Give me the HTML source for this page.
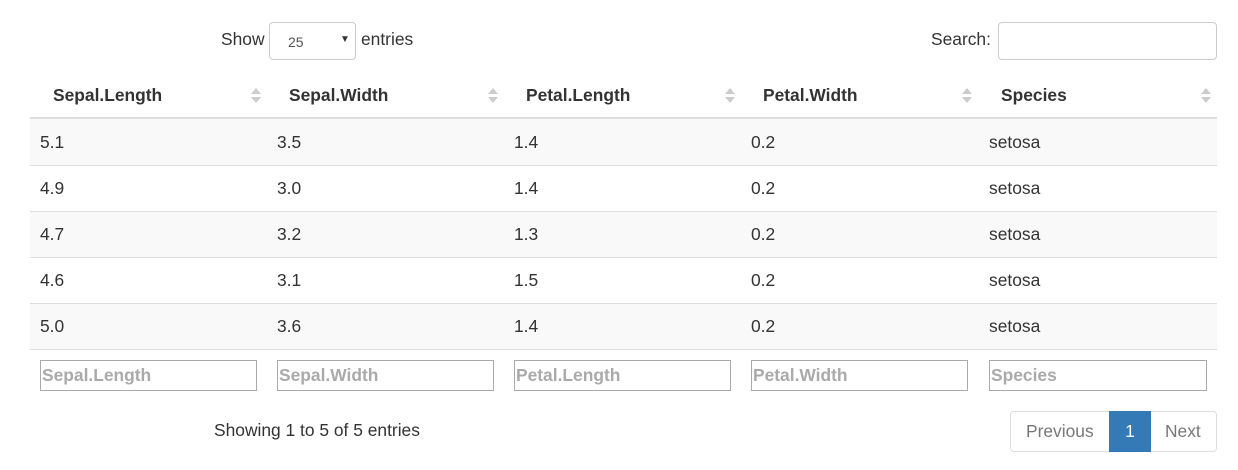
<!DOCTYPE html>
<html><head><style>
body{margin:0;width:1238px;height:470px;background:#fff;font-family:"Liberation Sans",sans-serif;color:#333;font-size:17.4px;position:relative;overflow:hidden}
.a{position:absolute}
.sel{left:269px;top:22px;width:87px;height:38px;border:1px solid #ccc;border-radius:4px;box-sizing:border-box;font-size:14px}
.inp{border:1px solid #ccc;border-radius:4px;box-sizing:border-box}
.th{top:72px;height:46px;font-weight:bold;line-height:46px}
.row{left:30px;width:1187px;height:46px;border-top:1px solid #ddd;box-sizing:border-box}
.fi{top:360px;width:217px;height:31px;border:1px solid #aaa;box-sizing:border-box;color:#aaa;font-weight:bold;font-size:17.4px;line-height:29px;padding-left:1px}
.col{top:119px;line-height:46px}
</style></head><body>
<div class="a" style="left:221px;top:29px">Show</div>
<div class="a sel"><span class="a" style="left:18px;top:11px;color:#555">25</span><span class="a" style="left:70px;top:11px;font-size:10px">▼</span></div>
<div class="a" style="left:361px;top:29px">entries</div>
<div class="a" style="left:931px;top:29px">Search:</div>
<div class="a inp" style="left:998px;top:22px;width:219px;height:38px"></div>
<div class="a" style="left:30px;top:117px;width:1187px;height:2px;background:#ddd"></div>
<div class="a th" style="left:53px">Sepal.Length</div>
<div class="a th" style="left:289px">Sepal.Width</div>
<div class="a th" style="left:526px">Petal.Length</div>
<div class="a th" style="left:763px">Petal.Width</div>
<div class="a th" style="left:1001px">Species</div>
<svg class="a" style="left:250px;top:86px" width="987" height="20">
<g fill="#ccc">
<path d="M1 8 L6 2 L11 8Z M1 11 L6 17 L11 11Z"/>
<path transform="translate(237,0)" d="M1 8 L6 2 L11 8Z M1 11 L6 17 L11 11Z"/>
<path transform="translate(474,0)" d="M1 8 L6 2 L11 8Z M1 11 L6 17 L11 11Z"/>
<path transform="translate(711,0)" d="M1 8 L6 2 L11 8Z M1 11 L6 17 L11 11Z"/>
<path transform="translate(950,0)" d="M1 8 L6 2 L11 8Z M1 11 L6 17 L11 11Z"/>
</g></svg>
<div class="a row" style="top:119px;background:#f9f9f9;border-top:none"></div>
<div class="a row" style="top:165px"></div>
<div class="a row" style="top:211px;background:#f9f9f9"></div>
<div class="a row" style="top:257px"></div>
<div class="a row" style="top:303px;background:#f9f9f9"></div>
<div class="a row" style="top:349px;height:1px"></div>
<div class="a col" style="left:40px">5.1<br>4.9<br>4.7<br>4.6<br>5.0</div>
<div class="a col" style="left:277px">3.5<br>3.0<br>3.2<br>3.1<br>3.6</div>
<div class="a col" style="left:514px">1.4<br>1.4<br>1.3<br>1.5<br>1.4</div>
<div class="a col" style="left:751px">0.2<br>0.2<br>0.2<br>0.2<br>0.2</div>
<div class="a col" style="left:989px">setosa<br>setosa<br>setosa<br>setosa<br>setosa</div>
<div class="a fi" style="left:40px">Sepal.Length</div>
<div class="a fi" style="left:277px">Sepal.Width</div>
<div class="a fi" style="left:514px">Petal.Length</div>
<div class="a fi" style="left:751px">Petal.Width</div>
<div class="a fi" style="left:989px;width:218px">Species</div>
<div class="a" style="left:214px;top:420px">Showing 1 to 5 of 5 entries</div>
<div class="a" style="left:1010px;top:411px;width:207px;height:41px;border:1px solid #ddd;border-radius:4px;box-sizing:border-box"></div>
<div class="a" style="left:1026px;top:421px;color:#777">Previous</div>
<div class="a" style="left:1109px;top:411px;width:42px;height:41px;background:#337ab7;color:#fff;text-align:center;line-height:41px">1</div>
<div class="a" style="left:1165px;top:421px;color:#777">Next</div>
</body></html>
